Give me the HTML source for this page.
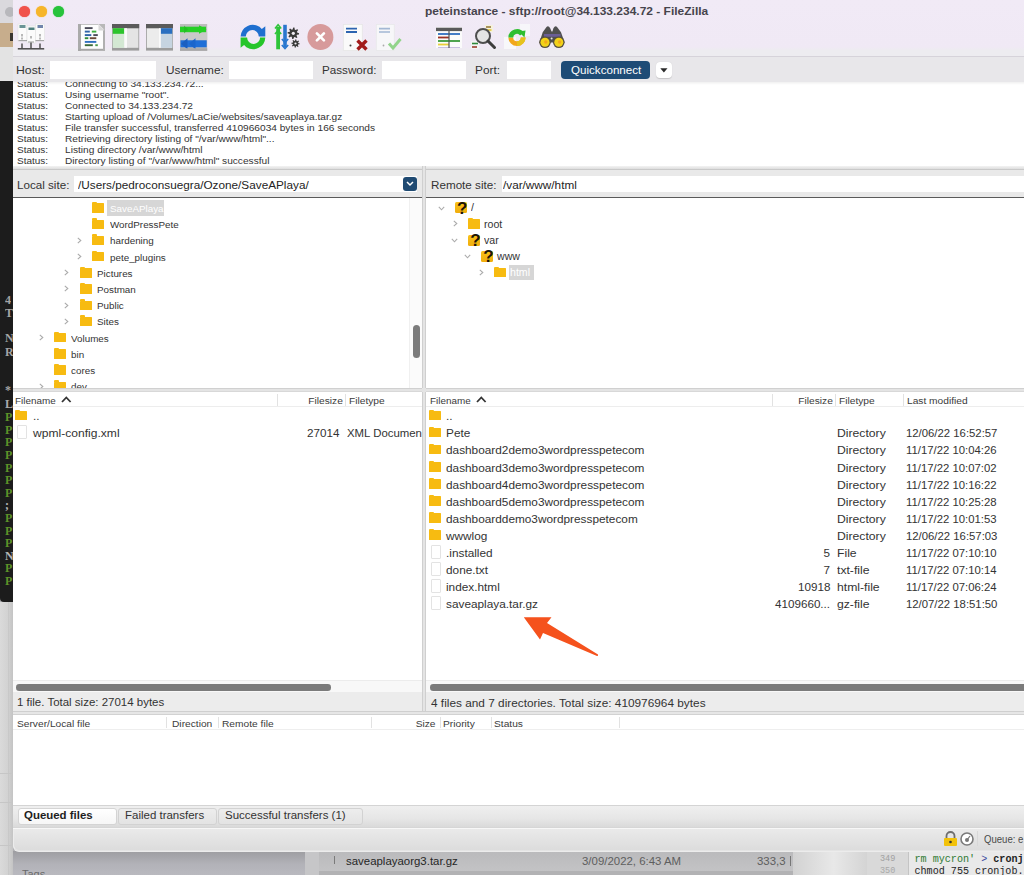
<!DOCTYPE html>
<html><head><meta charset="utf-8">
<style>
*{margin:0;padding:0;box-sizing:border-box}
html,body{width:1024px;height:875px;overflow:hidden;background:#b0b0b3;font-family:"Liberation Sans",sans-serif;color:#2e2e2e;position:relative}
.a{position:absolute}
.t{position:absolute;white-space:nowrap;line-height:1}
svg{position:absolute;overflow:visible}
</style></head><body>
<div class="a" style="left:0px;top:0px;width:13px;height:23px;background:#dad9dd"></div>
<div class="a" style="left:5px;top:7px;width:10px;height:9.5px;border-radius:50%;background:#b8b8bc"></div>
<div class="a" style="left:0px;top:23px;width:13px;height:24px;background:#c7ad8c"></div>
<div class="a" style="left:10px;top:33px;width:3px;height:8px;background:#3a3530"></div>
<div class="a" style="left:0px;top:47px;width:13px;height:34px;background:#e3e3e3"></div>
<div class="a" style="left:0px;top:81px;width:13px;height:521px;background:#1c1c1c;border-bottom-left-radius:4px"></div>
<div class="a" style="left:0px;top:602px;width:13px;height:273px;background:linear-gradient(90deg,#dadada,#d2d2d2 60%,#c4c4c4)"></div>
<div class="a" style="left:8px;top:602px;width:1px;height:273px;background:#c8c8c8"></div>
<div class="a" style="left:0px;top:773px;width:13px;height:1px;background:#c6c6c6"></div>
<div class="a" style="left:0px;top:802px;width:13px;height:1px;background:#c6c6c6"></div>
<div class="a" style="left:0px;top:845px;width:13px;height:1px;background:#c6c6c6"></div>
<div class="t" style="left:5px;top:294.3px;font-size:12px;color:#bdbdbd;font-family:'Liberation Serif',serif;font-weight:bold;opacity:0.85">4</div>
<div class="t" style="left:5px;top:307.1px;font-size:12px;color:#bdbdbd;font-family:'Liberation Serif',serif;font-weight:bold;opacity:0.85">T</div>
<div class="t" style="left:5px;top:331.9px;font-size:12px;color:#bdbdbd;font-family:'Liberation Serif',serif;font-weight:bold;opacity:0.85">N</div>
<div class="t" style="left:5px;top:345.5px;font-size:12px;color:#bdbdbd;font-family:'Liberation Serif',serif;font-weight:bold;opacity:0.85">R</div>
<div class="t" style="left:5px;top:384.1px;font-size:12px;color:#bdbdbd;font-family:'Liberation Serif',serif;font-weight:bold;opacity:0.85">*</div>
<div class="t" style="left:5px;top:398.3px;font-size:12px;color:#c4c4c4;font-family:'Liberation Serif',serif;font-weight:bold;opacity:0.85">L</div>
<div class="t" style="left:5px;top:411.1px;font-size:12px;color:#6aa82c;font-family:'Liberation Serif',serif;font-weight:bold;opacity:0.85">P</div>
<div class="t" style="left:5px;top:423.7px;font-size:12px;color:#6aa82c;font-family:'Liberation Serif',serif;font-weight:bold;opacity:0.85">P</div>
<div class="t" style="left:5px;top:436.3px;font-size:12px;color:#6aa82c;font-family:'Liberation Serif',serif;font-weight:bold;opacity:0.85">P</div>
<div class="t" style="left:5px;top:448.9px;font-size:12px;color:#6aa82c;font-family:'Liberation Serif',serif;font-weight:bold;opacity:0.85">P</div>
<div class="t" style="left:5px;top:461.5px;font-size:12px;color:#6aa82c;font-family:'Liberation Serif',serif;font-weight:bold;opacity:0.85">P</div>
<div class="t" style="left:5px;top:474.1px;font-size:12px;color:#6aa82c;font-family:'Liberation Serif',serif;font-weight:bold;opacity:0.85">P</div>
<div class="t" style="left:5px;top:486.7px;font-size:12px;color:#6aa82c;font-family:'Liberation Serif',serif;font-weight:bold;opacity:0.85">P</div>
<div class="t" style="left:5px;top:499.3px;font-size:12px;color:#cfcfcf;font-family:'Liberation Serif',serif;font-weight:bold;opacity:0.85">;</div>
<div class="t" style="left:5px;top:511.9px;font-size:12px;color:#6aa82c;font-family:'Liberation Serif',serif;font-weight:bold;opacity:0.85">P</div>
<div class="t" style="left:5px;top:524.5px;font-size:12px;color:#6aa82c;font-family:'Liberation Serif',serif;font-weight:bold;opacity:0.85">P</div>
<div class="t" style="left:5px;top:537.1px;font-size:12px;color:#6aa82c;font-family:'Liberation Serif',serif;font-weight:bold;opacity:0.85">P</div>
<div class="t" style="left:5px;top:549.7px;font-size:12px;color:#cfcfcf;font-family:'Liberation Serif',serif;font-weight:bold;opacity:0.85">N</div>
<div class="t" style="left:5px;top:562.3px;font-size:12px;color:#6aa82c;font-family:'Liberation Serif',serif;font-weight:bold;opacity:0.85">P</div>
<div class="t" style="left:5px;top:574.9px;font-size:12px;color:#6aa82c;font-family:'Liberation Serif',serif;font-weight:bold;opacity:0.85">P</div>
<div class="a" style="left:13px;top:851px;width:1011px;height:24px;background:linear-gradient(#9d9da1,#b2b2b8 55%,#b9b9bf)"></div>
<div class="t" style="left:22px;top:870.3px;font-size:10px;color:#6a6a6a;transform:scaleX(1.1);transform-origin:0 0;">Tags</div>
<div class="a" style="left:305px;top:852px;width:489px;height:19px;background:linear-gradient(#bababc,#c3c3c5)"></div>
<div class="a" style="left:305px;top:871px;width:489px;height:4px;background:#b2b2b4"></div>
<div class="a" style="left:305px;top:852px;width:14px;height:23px;background:#c6c6c8"></div>
<div class="a" style="left:334px;top:856px;width:1px;height:8px;background:#7a7a7a"></div>
<div class="t" style="left:346px;top:856.66px;font-size:10.4px;color:#262626;transform:scaleX(1.1);transform-origin:0 0;">saveaplayaorg3.tar.gz</div>
<div class="t" style="left:582px;top:856.66px;font-size:10.4px;color:#5e5e5e;transform:scaleX(1.1);transform-origin:0 0;">3/09/2022, 6:43 AM</div>
<div class="t" style="left:757px;top:856.66px;font-size:10.4px;color:#5e5e5e;transform:scaleX(1.1);transform-origin:0 0;">333,3</div>
<div class="a" style="left:790px;top:856px;width:1.2px;height:10px;background:#777"></div>
<div class="a" style="left:793px;top:851px;width:74px;height:24px;background:linear-gradient(90deg,#d2d2d2,#e8e8e8 55%,#d4d4d4)"></div>
<div class="a" style="left:867px;top:851px;width:41px;height:24px;background:#d9d9d9"></div>
<div class="t" style="left:880px;top:855.27px;font-size:8.5px;color:#a0a0a0;font-family:'Liberation Mono',monospace;">349</div>
<div class="t" style="left:880px;top:866.87px;font-size:8.5px;color:#a8a8a8;font-family:'Liberation Mono',monospace;">350</div>
<div class="a" style="left:907.5px;top:851px;width:1px;height:24px;background:#c4c4c4"></div>
<div class="a" style="left:908.5px;top:851px;width:116px;height:24px;background:#e9e9e9"></div>
<div class="t" style="left:914.5px;top:855.21px;font-size:10.1px;color:#1e1e1e;font-family:'Liberation Mono',monospace;"><span style="color:#2e7a32">rm mycron'</span> <span style="color:#3848a0">&gt;</span> <b>cronj</b></div>
<div class="t" style="left:914.5px;top:866.71px;font-size:10.1px;color:#1e1e1e;font-family:'Liberation Mono',monospace;">chmod 755 cronjob.</div>
<div class="a" style="left:13px;top:-10px;width:1030px;height:861.5px;background:#ececec;border-bottom-left-radius:6px"></div>
<div class="a" style="left:13px;top:0px;width:1011px;height:57px;background:linear-gradient(#f1eaf6,#f0e9f5 84%,#edecf0 90%,#edecf0);border-bottom:1px solid #d6d3da"></div>
<div class="a" style="left:19.3px;top:6.2px;width:11px;height:11px;border-radius:50%;background:#f0524c;box-shadow:0 0 1px #f0524c"></div>
<div class="a" style="left:36.3px;top:6.2px;width:11px;height:11px;border-radius:50%;background:#f6b52a;box-shadow:0 0 1px #f6b52a"></div>
<div class="a" style="left:53.3px;top:6.2px;width:11px;height:11px;border-radius:50%;background:#27c33b;box-shadow:0 0 1px #27c33b"></div>
<div class="t" style="left:424.5px;top:6.2px;font-size:11.3px;color:#46444c;transform:scaleX(1.06);transform-origin:0 0;font-weight:bold">peteinstance - sftp://root@34.133.234.72 - FileZilla</div>
<svg style="left:16px;top:22px" width="30" height="30" viewBox="0 0 30 30">
<rect x="2" y="2" width="9" height="17" fill="#fbfbfb" stroke="#e2e2e2" stroke-width="0.6"/>
<rect x="11" y="4" width="8.5" height="17" fill="#fbfbfb" stroke="#e2e2e2" stroke-width="0.6"/>
<rect x="19.5" y="2" width="9" height="17" fill="#fbfbfb" stroke="#e2e2e2" stroke-width="0.6"/>
<rect x="3.5" y="3" width="6" height="3" fill="#6a9496"/>
<rect x="12.5" y="5.5" width="6" height="2.5" fill="#50807f"/>
<rect x="21.5" y="3" width="5.5" height="3" fill="#7084ab"/>
<path d="M6 12v2.5M6 15.5v2M15 14v2.5M24 12v2.5M24 15.5v2" stroke="#666" stroke-width="0.9"/>
<path d="M2.5 18.6h8.5M19.5 18.6h8.5M12 20h6" stroke="#888" stroke-width="0.8"/>
<path d="M6 21.5v5M15 20.5v6M24 21.5v5" stroke="#505050" stroke-width="1.5"/>
<path d="M1.8 26.8h26.4" stroke="#4a4a4a" stroke-width="1.5"/></svg>
<svg style="left:77.7px;top:23.9px" width="27" height="27" viewBox="0 0 27 27">
<path d="M1.5 0.5h19l5.5 5.5v19.5h-24.5z" fill="#fdfdfd"/>
<path d="M0 0h3v27h-3z" fill="#aaaaaa"/>
<path d="M0 24.8h27v2h-27z" fill="#a6a6a6"/>
<path d="M25 5.5h2v21h-2z" fill="#b0b0b0"/>
<path d="M3 0h17.5v1h-17.5z" fill="#c4c4c4"/>
<path d="M20.5 0.5l6 6h-6z" fill="#d8d8d8"/>
<path d="M20.5 0l6.5 6.5v-6.5z" fill="#b8b8b8"/>
<path d="M6.8 4.1h7.8" stroke="#4a4a58" stroke-width="1.9"/>
<path d="M6.8 7.6h5" stroke="#2f64a8" stroke-width="1.9"/><path d="M13.8 7.6h4.5" stroke="#3fae3f" stroke-width="1.9"/>
<path d="M6.8 11.1h6.5" stroke="#2f64a8" stroke-width="1.9"/><path d="M15.3 11.1h4.5" stroke="#4a4a58" stroke-width="1.9"/>
<path d="M6.8 14.2h3.5" stroke="#2e8a3a" stroke-width="1.9"/><path d="M11.8 14.2h6.5" stroke="#6a4a3a" stroke-width="1.9"/>
<path d="M6.8 17.9h11.5" stroke="#2f70c0" stroke-width="1.9"/>
<path d="M6.8 21.2h8" stroke="#3a6a3a" stroke-width="1.9"/><path d="M17.3 21.2h2.5" stroke="#4a9a4a" stroke-width="1.9"/></svg>
<svg style="left:111.7px;top:24.3px" width="27.2" height="26.6" viewBox="0 0 27.2 26.6">
<rect x="0" y="0" width="27.2" height="26.6" fill="#9c9c9c"/>
<rect x="0.8" y="4.2" width="25.6" height="19.6" fill="#e4e4e4"/>
<rect x="0" y="0" width="27.2" height="4.2" fill="#5a5a5a"/>
<rect x="0.8" y="4.2" width="11.5" height="5.7" fill="#2cc42c"/>
<rect x="0.8" y="9.9" width="11.5" height="13.9" fill="#d3e8d3"/>
<rect x="12.3" y="4.2" width="2.7" height="19.6" fill="#fafafa"/></svg>
<svg style="left:145.8px;top:24.3px" width="27" height="26.6" viewBox="0 0 27 26.6">
<rect x="0" y="0" width="27" height="26.6" fill="#9c9c9c"/>
<rect x="0.8" y="4.2" width="25.4" height="19.6" fill="#ececec"/>
<rect x="0" y="0" width="27" height="4.2" fill="#5a5a5a"/>
<rect x="14.7" y="4.2" width="11.5" height="5.7" fill="#2a6fc0"/>
<rect x="14.7" y="9.9" width="11.5" height="13.9" fill="#c6d4e1"/>
<rect x="13" y="4.2" width="1.7" height="19.6" fill="#fafafa"/></svg>
<svg style="left:179.9px;top:23.9px" width="27.2" height="26.8" viewBox="0 0 27.2 26.8">
<rect x="0" y="0" width="27.2" height="26.8" fill="#bdbdbd"/>
<rect x="0" y="8" width="27.2" height="8" fill="#c9c9c9"/>
<rect x="0" y="2.7" width="26" height="5.5" fill="#26cf26"/>
<path d="M19 1.2 L26.5 5.45 L19 9.7z" fill="#26cf26"/>
<path d="M4 1.5 L8 5.45 L4 9.4z" fill="#22b822" opacity="0.7"/>
<rect x="0.5" y="16.3" width="26.2" height="7" fill="#1f6fd8"/>
<path d="M7.5 14.3 L1 19.8 L7.5 25.3z" fill="#1a5fc0"/>
<path d="M15.5 14.3 L9 19.8 L15.5 25.3z" fill="#1a66cc"/>
<rect x="0" y="24.3" width="27.2" height="2.5" fill="#a8a8a8"/></svg>
<svg style="left:239.5px;top:23.5px" width="27" height="27" viewBox="0 0 27 27">
<path d="M0.6 12.5 A12.2 12.2 0 0 1 19.5 2.8 L21.8 4.9 L25.3 2.3 L25.3 12.5 L18.8 12.5 A6.4 6.4 0 0 0 5.8 12.5 Z" fill="#1f6fcf"/>
<path d="M25.3 13.5 A12.2 12.2 0 0 1 6.4 23.2 L4.1 21.1 L0.6 23.7 L0.6 13.5 L7.1 13.5 A6.4 6.4 0 0 0 20.1 13.5 Z" fill="#27c52b"/></svg>
<svg style="left:274px;top:23.5px" width="28" height="27" viewBox="0 0 28 27">
<path d="M4.1 25.3V3" stroke="#2fc43a" stroke-width="3.8"/>
<path d="M1 4.5L4.1 0.8L7.2 4.5M1 10L4.1 6.5L7.2 10" stroke="#2fc43a" stroke-width="1.6" fill="none"/>
<path d="M11 0.8V23" stroke="#2a76cf" stroke-width="3.6"/>
<path d="M7.8 15L11 18.5L14.2 15M7.8 21L11 24.5L14.2 21" stroke="#2a76cf" stroke-width="1.6" fill="none"/>
<polygon points="19.30,3.50 20.43,3.61 20.79,5.70 21.47,6.06 23.40,5.20 24.12,6.08 22.90,7.81 23.13,8.54 25.10,9.30 24.99,10.43 22.90,10.79 22.54,11.47 23.40,13.40 22.52,14.12 20.79,12.90 20.06,13.13 19.30,15.10 18.17,14.99 17.81,12.90 17.13,12.54 15.20,13.40 14.48,12.52 15.70,10.79 15.47,10.06 13.50,9.30 13.61,8.17 15.70,7.81 16.06,7.13 15.20,5.20 16.08,4.48 17.81,5.70 18.54,5.47" fill="#3a3a3a"/><circle cx="19.3" cy="9.3" r="1.6" fill="#efebf2"/><polygon points="21.50,15.30 22.32,15.38 22.57,16.91 23.06,17.17 24.47,16.53 24.99,17.17 24.09,18.43 24.25,18.95 25.70,19.50 25.62,20.32 24.09,20.57 23.83,21.06 24.47,22.47 23.83,22.99 22.57,22.09 22.05,22.25 21.50,23.70 20.68,23.62 20.43,22.09 19.94,21.83 18.53,22.47 18.01,21.83 18.91,20.57 18.75,20.05 17.30,19.50 17.38,18.68 18.91,18.43 19.17,17.94 18.53,16.53 19.17,16.01 20.43,16.91 20.95,16.75" fill="#3a3a3a"/><circle cx="21.5" cy="19.5" r="1.1" fill="#efebf2"/></svg>
<svg style="left:307px;top:23.5px" width="27" height="27" viewBox="0 0 27 27">
<circle cx="13.4" cy="13" r="13" fill="#d79a9b"/>
<path d="M9.9 9.4l7 7M16.9 9.4l-7 7" stroke="#fff" stroke-width="2.7" stroke-linecap="round"/></svg>
<svg style="left:342.5px;top:23.5px" width="28" height="28" viewBox="0 0 28 28">
<rect x="0.3" y="0.5" width="19" height="26" fill="#fafafa" stroke="#e6e6e6" stroke-width="0.8"/>
<path d="M3 4.6h11M3 8h11" stroke="#2c64b0" stroke-width="1.9"/>
<circle cx="7.5" cy="21.5" r="1" fill="#444"/>
<path d="M14.5 16.5l9 9M23.5 16.5l-9 9" stroke="#a21b1b" stroke-width="3.4"/></svg>
<svg style="left:376px;top:23.5px" width="28" height="28" viewBox="0 0 28 28">
<rect x="0.3" y="0.5" width="18" height="26" fill="#f7f7f9" stroke="#e8e8ea" stroke-width="0.8"/>
<path d="M3 4.6h11M3 8h11" stroke="#a3b8d4" stroke-width="1.7"/>
<circle cx="7.5" cy="21.5" r="0.9" fill="#aaa"/>
<path d="M13 19.5l4 4.5l7.5 -9" stroke="#92d48b" stroke-width="3" fill="none"/></svg>
<svg style="left:436px;top:26.5px" width="28" height="24" viewBox="0 0 28 24">
<rect x="0" y="0" width="26" height="21" fill="#fbfbfb"/>
<rect x="0" y="0.7" width="26" height="3.4" fill="#5a5a5a"/>
<path d="M2 7h22" stroke="#2f6fc0" stroke-width="1.8"/>
<path d="M2 10.5h11" stroke="#9a3226" stroke-width="1.8"/>
<path d="M2 14h22" stroke="#3c9a3c" stroke-width="1.8"/>
<path d="M2 17.5h11" stroke="#e8cf3a" stroke-width="1.8"/>
<path d="M2 20.5h22" stroke="#c8c0e0" stroke-width="1"/>
<path d="M13 4v17" stroke="#555" stroke-width="1.2"/></svg>
<svg style="left:471px;top:23px" width="28" height="28" viewBox="0 0 28 28">
<rect x="14" y="2" width="8" height="7" fill="#f6f2dc"/>
<path d="M15 4h5" stroke="#8a6a2a" stroke-width="1.4"/><path d="M15.5 7h5" stroke="#e2c43a" stroke-width="1.6"/>
<rect x="0" y="18" width="8" height="8" fill="#f4f4f4"/>
<path d="M1 20.5h6" stroke="#2f8a3a" stroke-width="1.6"/><path d="M1 24h5" stroke="#9a3a2a" stroke-width="1.6"/>
<circle cx="12" cy="13" r="7" fill="#e4e4e4" stroke="#4e4e4e" stroke-width="2"/>
<path d="M17 18l6.5 6.5" stroke="#3d3d3d" stroke-width="3" stroke-linecap="round"/></svg>
<svg style="left:503px;top:23px" width="28" height="28" viewBox="0 0 28 28">
<rect x="17" y="1" width="10" height="12" fill="#f7f6fa"/>
<rect x="1" y="14" width="12" height="12" fill="#f8f8fa"/>
<path d="M20.2 14.5 A6.2 6.2 0 0 1 7.8 14.5" stroke="#f2a71c" stroke-width="4.8" fill="none"/>
<path d="M14 20.7 A6.2 6.2 0 0 0 20.2 14.5" stroke="#e6c31e" stroke-width="4.8" fill="none"/>
<path d="M7.8 14.5 A6.2 6.2 0 0 1 19 11" stroke="#2fbf30" stroke-width="4.8" fill="none"/>
<path d="M15.5 8.5 L22.5 7.5 L21.5 14.5z" fill="#2fbf30"/></svg>
<svg style="left:538.5px;top:24.5px" width="27" height="25" viewBox="0 0 27 25">
<path d="M3.7 7.2 L6.6 3.2 Q8.9 -0.8 11.2 3.2 L12.6 6.5 L13.4 6.5 L14.4 3.2 Q16.7 -0.8 19 3.2 L22 7.2 L25.6 17.5 L0.4 17.5 Z" fill="#505050"/>
<rect x="5" y="9" width="16.5" height="2.8" fill="#6a5e96"/>
<circle cx="12.6" cy="13.5" r="1" fill="#e8e8e8"/>
<circle cx="6" cy="17.3" r="5.8" fill="#57503f"/><circle cx="19.8" cy="17.3" r="5.8" fill="#57503f"/>
<circle cx="6" cy="17.3" r="4.5" fill="#f2d21a"/><circle cx="19.8" cy="17.3" r="4.5" fill="#f2d21a"/>
<circle cx="6.8" cy="17" r="1.7" fill="#f4a81c"/><circle cx="20.6" cy="17" r="1.7" fill="#f4a81c"/></svg>
<div class="a" style="left:13px;top:57px;width:1011px;height:25px;background:#e8e7ea"></div>
<div class="t" style="left:16px;top:66.13px;font-size:10.2px;color:#333333;transform:scaleX(1.2);transform-origin:0 0;">Host:</div>
<div class="a" style="left:50px;top:61px;width:105.5px;height:18px;background:#fff"></div>
<div class="t" style="left:165.8px;top:66.13px;font-size:10.2px;color:#333333;transform:scaleX(1.16);transform-origin:0 0;">Username:</div>
<div class="a" style="left:228.6px;top:61px;width:84px;height:18px;background:#fff"></div>
<div class="t" style="left:322px;top:66.13px;font-size:10.2px;color:#333333;transform:scaleX(1.145);transform-origin:0 0;">Password:</div>
<div class="a" style="left:381.5px;top:61px;width:84px;height:18px;background:#fff"></div>
<div class="t" style="left:474.7px;top:66.13px;font-size:10.2px;color:#333333;transform:scaleX(1.16);transform-origin:0 0;">Port:</div>
<div class="a" style="left:507px;top:61px;width:44px;height:18px;background:#fff"></div>
<div class="a" style="left:561.3px;top:61.3px;width:89px;height:17.6px;background:#1e4c76;border-radius:4px"></div>
<div class="t" style="left:570.7px;top:64.85px;font-size:11px;color:#fff;transform:scaleX(1.055);transform-origin:0 0;">Quickconnect</div>
<div class="a" style="left:655.6px;top:61.9px;width:16px;height:16.4px;background:#fff;border-radius:4px;box-shadow:0 0.5px 1px rgba(0,0,0,.15)"></div>
<svg style="left:660px;top:67.5px" width="8" height="5" viewBox="0 0 8 5"><path d="M0.3 0.3h7.2l-3.6 4.2z" fill="#2a2a2a"/></svg>
<div class="a" style="left:13px;top:82px;width:1011px;height:83.5px;background:#fff;overflow:hidden">
<div class="t" style="left:4.4px;top:-2.23px;font-size:9.1px;color:#333;transform:scaleX(1.1);transform-origin:0 0">Status:</div>
<div class="t" style="left:52.3px;top:-2.23px;font-size:9.1px;color:#333;transform:scaleX(1.115);transform-origin:0 0">Connecting to 34.133.234.72...</div>
<div class="t" style="left:4.4px;top:8.8px;font-size:9.1px;color:#333;transform:scaleX(1.1);transform-origin:0 0">Status:</div>
<div class="t" style="left:52.3px;top:8.8px;font-size:9.1px;color:#333;transform:scaleX(1.115);transform-origin:0 0">Using username "root".</div>
<div class="t" style="left:4.4px;top:19.83px;font-size:9.1px;color:#333;transform:scaleX(1.1);transform-origin:0 0">Status:</div>
<div class="t" style="left:52.3px;top:19.83px;font-size:9.1px;color:#333;transform:scaleX(1.115);transform-origin:0 0">Connected to 34.133.234.72</div>
<div class="t" style="left:4.4px;top:30.85px;font-size:9.1px;color:#333;transform:scaleX(1.1);transform-origin:0 0">Status:</div>
<div class="t" style="left:52.3px;top:30.85px;font-size:9.1px;color:#333;transform:scaleX(1.115);transform-origin:0 0">Starting upload of /Volumes/LaCie/websites/saveaplaya.tar.gz</div>
<div class="t" style="left:4.4px;top:41.88px;font-size:9.1px;color:#333;transform:scaleX(1.1);transform-origin:0 0">Status:</div>
<div class="t" style="left:52.3px;top:41.88px;font-size:9.1px;color:#333;transform:scaleX(1.115);transform-origin:0 0">File transfer successful, transferred 410966034 bytes in 166 seconds</div>
<div class="t" style="left:4.4px;top:52.91px;font-size:9.1px;color:#333;transform:scaleX(1.1);transform-origin:0 0">Status:</div>
<div class="t" style="left:52.3px;top:52.91px;font-size:9.1px;color:#333;transform:scaleX(1.115);transform-origin:0 0">Retrieving directory listing of "/var/www/html"...</div>
<div class="t" style="left:4.4px;top:63.94px;font-size:9.1px;color:#333;transform:scaleX(1.1);transform-origin:0 0">Status:</div>
<div class="t" style="left:52.3px;top:63.94px;font-size:9.1px;color:#333;transform:scaleX(1.115);transform-origin:0 0">Listing directory /var/www/html</div>
<div class="t" style="left:4.4px;top:74.97px;font-size:9.1px;color:#333;transform:scaleX(1.1);transform-origin:0 0">Status:</div>
<div class="t" style="left:52.3px;top:74.97px;font-size:9.1px;color:#333;transform:scaleX(1.115);transform-origin:0 0">Directory listing of "/var/www/html" successful</div>
</div>
<div class="a" style="left:13px;top:82px;width:1011px;height:3px;background:linear-gradient(rgba(0,0,0,0.06),rgba(0,0,0,0))"></div>
<div class="a" style="left:13px;top:165.5px;width:1011px;height:3.7px;background:linear-gradient(#f3f3f3,#dedede)"></div>
<div class="a" style="left:13px;top:169.2px;width:1011px;height:1px;background:#c9c9c9"></div>
<div class="a" style="left:13px;top:170.2px;width:409px;height:26.8px;background:#e9e9e9"></div>
<div class="t" style="left:16.6px;top:180.75px;font-size:10.3px;color:#333333;transform:scaleX(1.13);transform-origin:0 0;">Local site:</div>
<div class="a" style="left:74px;top:176px;width:343px;height:16px;background:#fff"></div>
<div class="t" style="left:77.7px;top:180.41px;font-size:10.7px;color:#242424;transform:scaleX(1.1);transform-origin:0 0;">/Users/pedroconsuegra/Ozone/SaveAPlaya/</div>
<div class="a" style="left:13px;top:197px;width:409px;height:1px;background:#5a5a5a"></div>
<div class="a" style="left:403px;top:177px;width:14px;height:14px;background:#1f4a72;border-radius:3px"></div>
<svg style="left:406px;top:181px" width="8" height="6" viewBox="0 0 8 6"><path d="M1 1l3 3l3 -3" stroke="#fff" stroke-width="1.5" fill="none"/></svg>
<div class="a" style="left:426px;top:170.2px;width:598px;height:26.8px;background:#e9e9e9"></div>
<div class="t" style="left:430.8px;top:180.75px;font-size:10.3px;color:#333333;transform:scaleX(1.133);transform-origin:0 0;">Remote site:</div>
<div class="a" style="left:501.5px;top:176px;width:522.5px;height:16px;background:#fff"></div>
<div class="t" style="left:502.6px;top:180.41px;font-size:10.7px;color:#242424;transform:scaleX(1.1);transform-origin:0 0;">/var/www/html</div>
<div class="a" style="left:426px;top:197px;width:598px;height:1px;background:#5a5a5a"></div>
<div class="a" style="left:422px;top:166px;width:4px;height:546px;background:#e4e4e4;border-left:1px solid #cfcfcf;border-right:1px solid #cfcfcf"></div>
<div class="a" style="left:13px;top:198px;width:409px;height:190px;background:#fff"></div>
<div class="a" style="left:426px;top:198px;width:598px;height:190px;background:#fff"></div>
<div class="a" style="left:14px;top:198px;width:395px;height:190px;overflow:hidden">
<div class="a" style="left:78.31px;top:5.30px;width:12px;height:9.5px;background:#f7bb11;border-radius:0.5px"></div>
<div class="a" style="left:78.31px;top:4.00px;width:5px;height:2px;background:#f7bb11;border-radius:1px 1px 0 0"></div>
<div class="a" style="left:92.81px;top:2.00px;width:57px;height:15.8px;background:#d6d6d6"></div>
<div class="t" style="left:95.51px;top:5.96px;font-size:9.7px;color:#fff;transform:scaleX(1.015);transform-origin:0 0;">SaveAPlaya</div>
<div class="a" style="left:78.31px;top:21.50px;width:12px;height:9.5px;background:#f7bb11;border-radius:0.5px"></div>
<div class="a" style="left:78.31px;top:20.20px;width:5px;height:2px;background:#f7bb11;border-radius:1px 1px 0 0"></div>
<div class="t" style="left:95.51px;top:22.16px;font-size:9.7px;color:#333333;transform:scaleX(1.015);transform-origin:0 0;">WordPressPete</div>
<svg style="left:63.11px;top:38.70px" width="5" height="7" viewBox="0 0 5 7"><path d="M0.8 0.8L3.8 3.5L0.8 6.2" stroke="#ababab" stroke-width="1.1" fill="none"/></svg>
<div class="a" style="left:78.31px;top:37.70px;width:12px;height:9.5px;background:#f7bb11;border-radius:0.5px"></div>
<div class="a" style="left:78.31px;top:36.40px;width:5px;height:2px;background:#f7bb11;border-radius:1px 1px 0 0"></div>
<div class="t" style="left:95.51px;top:38.36px;font-size:9.7px;color:#333333;transform:scaleX(1.015);transform-origin:0 0;">hardening</div>
<svg style="left:63.11px;top:54.90px" width="5" height="7" viewBox="0 0 5 7"><path d="M0.8 0.8L3.8 3.5L0.8 6.2" stroke="#ababab" stroke-width="1.1" fill="none"/></svg>
<div class="a" style="left:78.31px;top:53.90px;width:12px;height:9.5px;background:#f7bb11;border-radius:0.5px"></div>
<div class="a" style="left:78.31px;top:52.60px;width:5px;height:2px;background:#f7bb11;border-radius:1px 1px 0 0"></div>
<div class="t" style="left:95.51px;top:54.56px;font-size:9.7px;color:#333333;transform:scaleX(1.015);transform-origin:0 0;">pete_plugins</div>
<svg style="left:50.34px;top:71.10px" width="5" height="7" viewBox="0 0 5 7"><path d="M0.8 0.8L3.8 3.5L0.8 6.2" stroke="#ababab" stroke-width="1.1" fill="none"/></svg>
<div class="a" style="left:65.54px;top:70.10px;width:12px;height:9.5px;background:#f7bb11;border-radius:0.5px"></div>
<div class="a" style="left:65.54px;top:68.80px;width:5px;height:2px;background:#f7bb11;border-radius:1px 1px 0 0"></div>
<div class="t" style="left:82.74px;top:70.76px;font-size:9.7px;color:#333333;transform:scaleX(1.015);transform-origin:0 0;">Pictures</div>
<svg style="left:50.34px;top:87.30px" width="5" height="7" viewBox="0 0 5 7"><path d="M0.8 0.8L3.8 3.5L0.8 6.2" stroke="#ababab" stroke-width="1.1" fill="none"/></svg>
<div class="a" style="left:65.54px;top:86.30px;width:12px;height:9.5px;background:#f7bb11;border-radius:0.5px"></div>
<div class="a" style="left:65.54px;top:85.00px;width:5px;height:2px;background:#f7bb11;border-radius:1px 1px 0 0"></div>
<div class="t" style="left:82.74px;top:86.96px;font-size:9.7px;color:#333333;transform:scaleX(1.015);transform-origin:0 0;">Postman</div>
<svg style="left:50.34px;top:103.50px" width="5" height="7" viewBox="0 0 5 7"><path d="M0.8 0.8L3.8 3.5L0.8 6.2" stroke="#ababab" stroke-width="1.1" fill="none"/></svg>
<div class="a" style="left:65.54px;top:102.50px;width:12px;height:9.5px;background:#f7bb11;border-radius:0.5px"></div>
<div class="a" style="left:65.54px;top:101.20px;width:5px;height:2px;background:#f7bb11;border-radius:1px 1px 0 0"></div>
<div class="t" style="left:82.74px;top:103.16px;font-size:9.7px;color:#333333;transform:scaleX(1.015);transform-origin:0 0;">Public</div>
<svg style="left:50.34px;top:119.70px" width="5" height="7" viewBox="0 0 5 7"><path d="M0.8 0.8L3.8 3.5L0.8 6.2" stroke="#ababab" stroke-width="1.1" fill="none"/></svg>
<div class="a" style="left:65.54px;top:118.70px;width:12px;height:9.5px;background:#f7bb11;border-radius:0.5px"></div>
<div class="a" style="left:65.54px;top:117.40px;width:5px;height:2px;background:#f7bb11;border-radius:1px 1px 0 0"></div>
<div class="t" style="left:82.74px;top:119.36px;font-size:9.7px;color:#333333;transform:scaleX(1.015);transform-origin:0 0;">Sites</div>
<svg style="left:24.80px;top:135.90px" width="5" height="7" viewBox="0 0 5 7"><path d="M0.8 0.8L3.8 3.5L0.8 6.2" stroke="#ababab" stroke-width="1.1" fill="none"/></svg>
<div class="a" style="left:40.00px;top:134.90px;width:12px;height:9.5px;background:#f7bb11;border-radius:0.5px"></div>
<div class="a" style="left:40.00px;top:133.60px;width:5px;height:2px;background:#f7bb11;border-radius:1px 1px 0 0"></div>
<div class="t" style="left:57.20px;top:135.56px;font-size:9.7px;color:#333333;transform:scaleX(1.015);transform-origin:0 0;">Volumes</div>
<div class="a" style="left:40.00px;top:151.10px;width:12px;height:9.5px;background:#f7bb11;border-radius:0.5px"></div>
<div class="a" style="left:40.00px;top:149.80px;width:5px;height:2px;background:#f7bb11;border-radius:1px 1px 0 0"></div>
<div class="t" style="left:57.20px;top:151.76px;font-size:9.7px;color:#333333;transform:scaleX(1.015);transform-origin:0 0;">bin</div>
<div class="a" style="left:40.00px;top:167.30px;width:12px;height:9.5px;background:#f7bb11;border-radius:0.5px"></div>
<div class="a" style="left:40.00px;top:166.00px;width:5px;height:2px;background:#f7bb11;border-radius:1px 1px 0 0"></div>
<div class="t" style="left:57.20px;top:167.96px;font-size:9.7px;color:#333333;transform:scaleX(1.015);transform-origin:0 0;">cores</div>
<svg style="left:24.80px;top:184.50px" width="5" height="7" viewBox="0 0 5 7"><path d="M0.8 0.8L3.8 3.5L0.8 6.2" stroke="#ababab" stroke-width="1.1" fill="none"/></svg>
<div class="a" style="left:40.00px;top:183.50px;width:12px;height:9.5px;background:#f7bb11;border-radius:0.5px"></div>
<div class="a" style="left:40.00px;top:182.20px;width:5px;height:2px;background:#f7bb11;border-radius:1px 1px 0 0"></div>
<div class="t" style="left:57.20px;top:184.16px;font-size:9.7px;color:#333333;transform:scaleX(1.015);transform-origin:0 0;">dev</div>
</div>
<div class="a" style="left:409px;top:198px;width:13px;height:190px;background:#fbfbfb;border-left:1px solid #f0f0f0"></div>
<div class="a" style="left:413px;top:325px;width:7px;height:32.5px;background:#7c7c7c;border-radius:3.5px"></div>
<svg style="left:437.5px;top:205.5px" width="7" height="5" viewBox="0 0 7 5"><path d="M0.8 0.8L3.5 3.8L6.2 0.8" stroke="#ababab" stroke-width="1.1" fill="none"/></svg>
<div class="a" style="left:454.5px;top:202.2px;width:12px;height:11px;background:linear-gradient(#f9c21a,#f0ad0c);border-radius:1.5px"></div>
<div class="t" style="left:457.1px;top:199.6px;font-size:17px;font-weight:bold;color:#1c1408">?</div>
<div class="t" style="left:471.0px;top:203.4px;font-size:10px;color:#333333;transform:scaleX(1.06);transform-origin:0 0;">/</div>
<svg style="left:452.6px;top:220.2px" width="5" height="7" viewBox="0 0 5 7"><path d="M0.8 0.8L3.8 3.5L0.8 6.2" stroke="#ababab" stroke-width="1.1" fill="none"/></svg>
<div class="a" style="left:467.6px;top:219.2px;width:12px;height:9.5px;background:#f7bb11;border-radius:0.5px"></div>
<div class="a" style="left:467.6px;top:217.89999999999998px;width:5px;height:2px;background:#f7bb11;border-radius:1px 1px 0 0"></div>
<div class="t" style="left:484.1px;top:219.6px;font-size:10px;color:#333333;transform:scaleX(1.06);transform-origin:0 0;">root</div>
<svg style="left:450.6px;top:237.9px" width="7" height="5" viewBox="0 0 7 5"><path d="M0.8 0.8L3.5 3.8L6.2 0.8" stroke="#ababab" stroke-width="1.1" fill="none"/></svg>
<div class="a" style="left:467.6px;top:234.6px;width:12px;height:11px;background:linear-gradient(#f9c21a,#f0ad0c);border-radius:1.5px"></div>
<div class="t" style="left:470.20000000000005px;top:232.0px;font-size:17px;font-weight:bold;color:#1c1408">?</div>
<div class="t" style="left:484.1px;top:235.8px;font-size:10px;color:#333333;transform:scaleX(1.06);transform-origin:0 0;">var</div>
<svg style="left:463.7px;top:254.10000000000002px" width="7" height="5" viewBox="0 0 7 5"><path d="M0.8 0.8L3.5 3.8L6.2 0.8" stroke="#ababab" stroke-width="1.1" fill="none"/></svg>
<div class="a" style="left:480.7px;top:250.8px;width:12px;height:11px;background:linear-gradient(#f9c21a,#f0ad0c);border-radius:1.5px"></div>
<div class="t" style="left:483.3px;top:248.20000000000002px;font-size:17px;font-weight:bold;color:#1c1408">?</div>
<div class="t" style="left:497.2px;top:252.0px;font-size:10px;color:#333333;transform:scaleX(1.06);transform-origin:0 0;">www</div>
<svg style="left:478.8px;top:268.8px" width="5" height="7" viewBox="0 0 5 7"><path d="M0.8 0.8L3.8 3.5L0.8 6.2" stroke="#ababab" stroke-width="1.1" fill="none"/></svg>
<div class="a" style="left:493.8px;top:267.8px;width:12px;height:9.5px;background:#f7bb11;border-radius:0.5px"></div>
<div class="a" style="left:493.8px;top:266.5px;width:5px;height:2px;background:#f7bb11;border-radius:1px 1px 0 0"></div>
<div class="a" style="left:508.8px;top:264.8px;width:25px;height:15.5px;background:#d6d6d6"></div>
<div class="t" style="left:510.3px;top:268.2px;font-size:10px;color:#fff;transform:scaleX(1.06);transform-origin:0 0;">html</div>
<div class="a" style="left:13px;top:388px;width:1011px;height:4px;background:#e4e4e4;border-top:1px solid #d0d0d0;border-bottom:1px solid #d8d8d8"></div>
<div class="a" style="left:422px;top:388px;width:4px;height:4px;background:#e4e4e4"></div>
<div class="a" style="left:13px;top:392px;width:409px;height:288px;background:#fff"></div>
<div class="a" style="left:426px;top:392px;width:598px;height:288px;background:#fff"></div>
<div class="a" style="left:13px;top:392px;width:409px;height:15px;background:#fff;border-bottom:1px solid #ededed"></div>
<div class="a" style="left:426px;top:392px;width:598px;height:15px;background:#fff;border-bottom:1px solid #ededed"></div>
<div class="t" style="left:15.4px;top:396.88px;font-size:8.5px;color:#3a3a3a;transform:scaleX(1.165);transform-origin:0 0;">Filename</div>
<svg style="left:61px;top:396px" width="11" height="7" viewBox="0 0 11 7"><path d="M1 6L5.3 1.5L9.6 6" stroke="#333" stroke-width="1.8" fill="none"/></svg>
<div class="a" style="left:277px;top:394px;width:1px;height:12px;background:#e2e2e2"></div>
<div class="t" style="right:681.5px;top:396.88px;font-size:8.5px;color:#3a3a3a;text-align:right;transform:scaleX(1.2);transform-origin:100% 0;">Filesize</div>
<div class="a" style="left:345px;top:394px;width:1px;height:12px;background:#e2e2e2"></div>
<div class="t" style="left:349.2px;top:396.88px;font-size:8.5px;color:#3a3a3a;transform:scaleX(1.2);transform-origin:0 0;">Filetype</div>
<div class="t" style="left:429.8px;top:396.88px;font-size:8.5px;color:#3a3a3a;transform:scaleX(1.165);transform-origin:0 0;">Filename</div>
<svg style="left:475.5px;top:396px" width="11" height="7" viewBox="0 0 11 7"><path d="M1 6L5.3 1.5L9.6 6" stroke="#333" stroke-width="1.8" fill="none"/></svg>
<div class="a" style="left:771.5px;top:394px;width:1px;height:12px;background:#e2e2e2"></div>
<div class="t" style="right:191.5px;top:396.88px;font-size:8.5px;color:#3a3a3a;text-align:right;transform:scaleX(1.2);transform-origin:100% 0;">Filesize</div>
<div class="a" style="left:834.5px;top:394px;width:1px;height:12px;background:#e2e2e2"></div>
<div class="t" style="left:838.6px;top:396.88px;font-size:8.5px;color:#3a3a3a;transform:scaleX(1.2);transform-origin:0 0;">Filetype</div>
<div class="a" style="left:903px;top:394px;width:1px;height:12px;background:#e2e2e2"></div>
<div class="t" style="left:907px;top:396.88px;font-size:8.5px;color:#3a3a3a;transform:scaleX(1.2);transform-origin:0 0;">Last modified</div>
<div class="a" style="left:15px;top:410.8px;width:12px;height:9.5px;background:#f7bb11;border-radius:0.5px"></div>
<div class="a" style="left:15px;top:409.5px;width:5px;height:2px;background:#f7bb11;border-radius:1px 1px 0 0"></div>
<div class="t" style="left:33px;top:411.29px;font-size:10.6px;color:#333333;transform:scaleX(1.1);transform-origin:0 0;">..</div>
<div class="a" style="left:16.5px;top:425.38px;width:10px;height:14px;background:#fff;border:1px solid #e3e3e3;border-radius:1px"></div>
<div class="t" style="left:33px;top:428.37px;font-size:10.6px;color:#333333;transform:scaleX(1.14);transform-origin:0 0;">wpml-config.xml</div>
<div class="t" style="right:684.5px;top:428.37px;font-size:10.6px;color:#333333;text-align:right;transform:scaleX(1.1);transform-origin:100% 0;">27014</div>
<div class="a" style="left:346.5px;top:420px;width:76.5px;height:20px;overflow:hidden">
<div class="t" style="left:0.00px;top:8.37px;font-size:10.6px;color:#333333;transform:scaleX(1.075);transform-origin:0 0;">XML Documen</div>
</div>
<div class="a" style="left:428.6px;top:410.8px;width:12px;height:9.5px;background:#f7bb11;border-radius:0.5px"></div>
<div class="a" style="left:428.6px;top:409.5px;width:5px;height:2px;background:#f7bb11;border-radius:1px 1px 0 0"></div>
<div class="t" style="left:445.5px;top:411.29px;font-size:10.6px;color:#333333;transform:scaleX(1.115);transform-origin:0 0;">..</div>
<div class="a" style="left:428.6px;top:427.88px;width:12px;height:9.5px;background:#f7bb11;border-radius:0.5px"></div>
<div class="a" style="left:428.6px;top:426.58px;width:5px;height:2px;background:#f7bb11;border-radius:1px 1px 0 0"></div>
<div class="t" style="left:445.5px;top:428.37px;font-size:10.6px;color:#333333;transform:scaleX(1.115);transform-origin:0 0;">Pete</div>
<div class="t" style="left:837.3px;top:428.37px;font-size:10.6px;color:#333333;transform:scaleX(1.15);transform-origin:0 0;">Directory</div>
<div class="t" style="left:905.6px;top:428.37px;font-size:10.6px;color:#333333;transform:scaleX(1.07);transform-origin:0 0;">12/06/22 16:52:57</div>
<div class="a" style="left:428.6px;top:444.96px;width:12px;height:9.5px;background:#f7bb11;border-radius:0.5px"></div>
<div class="a" style="left:428.6px;top:443.65999999999997px;width:5px;height:2px;background:#f7bb11;border-radius:1px 1px 0 0"></div>
<div class="t" style="left:445.5px;top:445.45px;font-size:10.6px;color:#333333;transform:scaleX(1.115);transform-origin:0 0;">dashboard2demo3wordpresspetecom</div>
<div class="t" style="left:837.3px;top:445.45px;font-size:10.6px;color:#333333;transform:scaleX(1.15);transform-origin:0 0;">Directory</div>
<div class="t" style="left:905.6px;top:445.45px;font-size:10.6px;color:#333333;transform:scaleX(1.07);transform-origin:0 0;">11/17/22 10:04:26</div>
<div class="a" style="left:428.6px;top:462.04px;width:12px;height:9.5px;background:#f7bb11;border-radius:0.5px"></div>
<div class="a" style="left:428.6px;top:460.74px;width:5px;height:2px;background:#f7bb11;border-radius:1px 1px 0 0"></div>
<div class="t" style="left:445.5px;top:462.53px;font-size:10.6px;color:#333333;transform:scaleX(1.115);transform-origin:0 0;">dashboard3demo3wordpresspetecom</div>
<div class="t" style="left:837.3px;top:462.53px;font-size:10.6px;color:#333333;transform:scaleX(1.15);transform-origin:0 0;">Directory</div>
<div class="t" style="left:905.6px;top:462.53px;font-size:10.6px;color:#333333;transform:scaleX(1.07);transform-origin:0 0;">11/17/22 10:07:02</div>
<div class="a" style="left:428.6px;top:479.12px;width:12px;height:9.5px;background:#f7bb11;border-radius:0.5px"></div>
<div class="a" style="left:428.6px;top:477.82px;width:5px;height:2px;background:#f7bb11;border-radius:1px 1px 0 0"></div>
<div class="t" style="left:445.5px;top:479.61px;font-size:10.6px;color:#333333;transform:scaleX(1.115);transform-origin:0 0;">dashboard4demo3wordpresspetecom</div>
<div class="t" style="left:837.3px;top:479.61px;font-size:10.6px;color:#333333;transform:scaleX(1.15);transform-origin:0 0;">Directory</div>
<div class="t" style="left:905.6px;top:479.61px;font-size:10.6px;color:#333333;transform:scaleX(1.07);transform-origin:0 0;">11/17/22 10:16:22</div>
<div class="a" style="left:428.6px;top:496.2px;width:12px;height:9.5px;background:#f7bb11;border-radius:0.5px"></div>
<div class="a" style="left:428.6px;top:494.9px;width:5px;height:2px;background:#f7bb11;border-radius:1px 1px 0 0"></div>
<div class="t" style="left:445.5px;top:496.69px;font-size:10.6px;color:#333333;transform:scaleX(1.115);transform-origin:0 0;">dashboard5demo3wordpresspetecom</div>
<div class="t" style="left:837.3px;top:496.69px;font-size:10.6px;color:#333333;transform:scaleX(1.15);transform-origin:0 0;">Directory</div>
<div class="t" style="left:905.6px;top:496.69px;font-size:10.6px;color:#333333;transform:scaleX(1.07);transform-origin:0 0;">11/17/22 10:25:28</div>
<div class="a" style="left:428.6px;top:513.28px;width:12px;height:9.5px;background:#f7bb11;border-radius:0.5px"></div>
<div class="a" style="left:428.6px;top:511.97999999999996px;width:5px;height:2px;background:#f7bb11;border-radius:1px 1px 0 0"></div>
<div class="t" style="left:445.5px;top:513.77px;font-size:10.6px;color:#333333;transform:scaleX(1.115);transform-origin:0 0;">dashboarddemo3wordpresspetecom</div>
<div class="t" style="left:837.3px;top:513.77px;font-size:10.6px;color:#333333;transform:scaleX(1.15);transform-origin:0 0;">Directory</div>
<div class="t" style="left:905.6px;top:513.77px;font-size:10.6px;color:#333333;transform:scaleX(1.07);transform-origin:0 0;">11/17/22 10:01:53</div>
<div class="a" style="left:428.6px;top:530.3599999999999px;width:12px;height:9.5px;background:#f7bb11;border-radius:0.5px"></div>
<div class="a" style="left:428.6px;top:529.06px;width:5px;height:2px;background:#f7bb11;border-radius:1px 1px 0 0"></div>
<div class="t" style="left:445.5px;top:530.85px;font-size:10.6px;color:#333333;transform:scaleX(1.115);transform-origin:0 0;">wwwlog</div>
<div class="t" style="left:837.3px;top:530.85px;font-size:10.6px;color:#333333;transform:scaleX(1.15);transform-origin:0 0;">Directory</div>
<div class="t" style="left:905.6px;top:530.85px;font-size:10.6px;color:#333333;transform:scaleX(1.07);transform-origin:0 0;">12/06/22 16:57:03</div>
<div class="a" style="left:430.8px;top:544.9399999999999px;width:10px;height:14px;background:#fff;border:1px solid #e3e3e3;border-radius:1px"></div>
<div class="t" style="left:445.5px;top:547.93px;font-size:10.6px;color:#333333;transform:scaleX(1.115);transform-origin:0 0;">.installed</div>
<div class="t" style="right:194px;top:547.93px;font-size:10.6px;color:#333333;text-align:right;transform:scaleX(1.1);transform-origin:100% 0;">5</div>
<div class="t" style="left:837.3px;top:547.93px;font-size:10.6px;color:#333333;transform:scaleX(1.15);transform-origin:0 0;">File</div>
<div class="t" style="left:905.6px;top:547.93px;font-size:10.6px;color:#333333;transform:scaleX(1.07);transform-origin:0 0;">11/17/22 07:10:10</div>
<div class="a" style="left:430.8px;top:562.02px;width:10px;height:14px;background:#fff;border:1px solid #e3e3e3;border-radius:1px"></div>
<div class="t" style="left:445.5px;top:565.01px;font-size:10.6px;color:#333333;transform:scaleX(1.115);transform-origin:0 0;">done.txt</div>
<div class="t" style="right:194px;top:565.01px;font-size:10.6px;color:#333333;text-align:right;transform:scaleX(1.1);transform-origin:100% 0;">7</div>
<div class="t" style="left:837.3px;top:565.01px;font-size:10.6px;color:#333333;transform:scaleX(1.15);transform-origin:0 0;">txt-file</div>
<div class="t" style="left:905.6px;top:565.01px;font-size:10.6px;color:#333333;transform:scaleX(1.07);transform-origin:0 0;">11/17/22 07:10:14</div>
<div class="a" style="left:430.8px;top:579.0999999999999px;width:10px;height:14px;background:#fff;border:1px solid #e3e3e3;border-radius:1px"></div>
<div class="t" style="left:445.5px;top:582.09px;font-size:10.6px;color:#333333;transform:scaleX(1.115);transform-origin:0 0;">index.html</div>
<div class="t" style="right:194px;top:582.09px;font-size:10.6px;color:#333333;text-align:right;transform:scaleX(1.1);transform-origin:100% 0;">10918</div>
<div class="t" style="left:837.3px;top:582.09px;font-size:10.6px;color:#333333;transform:scaleX(1.15);transform-origin:0 0;">html-file</div>
<div class="t" style="left:905.6px;top:582.09px;font-size:10.6px;color:#333333;transform:scaleX(1.07);transform-origin:0 0;">11/17/22 07:06:24</div>
<div class="a" style="left:430.8px;top:596.18px;width:10px;height:14px;background:#fff;border:1px solid #e3e3e3;border-radius:1px"></div>
<div class="t" style="left:445.5px;top:599.17px;font-size:10.6px;color:#333333;transform:scaleX(1.115);transform-origin:0 0;">saveaplaya.tar.gz</div>
<div class="t" style="right:194px;top:599.17px;font-size:10.6px;color:#333333;text-align:right;transform:scaleX(1.1);transform-origin:100% 0;">4109660...</div>
<div class="t" style="left:837.3px;top:599.17px;font-size:10.6px;color:#333333;transform:scaleX(1.15);transform-origin:0 0;">gz-file</div>
<div class="t" style="left:905.6px;top:599.17px;font-size:10.6px;color:#333333;transform:scaleX(1.07);transform-origin:0 0;">12/07/22 18:51:50</div>
<svg style="left:520px;top:612px" width="85" height="50" viewBox="0 0 85 50"><path d="M3.8 5.3 L31.5 5.3 L27 11 L78 42.5 Q78.5 44 77 44 L23 21 L20 27.5 Z" fill="#f5521d"/></svg>
<div class="a" style="left:13px;top:680px;width:409px;height:11.5px;background:#f8f8f8;border-top:1px solid #ececec"></div>
<div class="a" style="left:15.5px;top:684px;width:315.5px;height:6.5px;background:#7b7b7b;border-radius:3.25px"></div>
<div class="a" style="left:426px;top:680px;width:598px;height:11.5px;background:#f8f8f8;border-top:1px solid #ececec"></div>
<div class="a" style="left:430px;top:684px;width:600px;height:6.5px;background:#7b7b7b;border-radius:3.25px"></div>
<div class="a" style="left:13px;top:691.5px;width:409px;height:21px;background:#ececec"></div>
<div class="t" style="left:16.8px;top:698.12px;font-size:10.45px;color:#333333;transform:scaleX(1.1);transform-origin:0 0;">1 file. Total size: 27014 bytes</div>
<div class="a" style="left:426px;top:691.5px;width:598px;height:21px;background:#ececec"></div>
<div class="t" style="left:431px;top:697.86px;font-size:10.75px;color:#333333;transform:scaleX(1.1);transform-origin:0 0;">4 files and 7 directories. Total size: 410976964 bytes</div>
<div class="a" style="left:13px;top:711px;width:1011px;height:3.8px;background:#e6e6e6;border-top:1px solid #cfcfcf;border-bottom:1px solid #d2d2d2"></div>
<div class="a" style="left:13px;top:714.5px;width:1011px;height:90.5px;background:#fff"></div>
<div class="a" style="left:13px;top:714.5px;width:1011px;height:15px;background:#fff;border-bottom:1px solid #eeeeee"></div>
<div class="t" style="left:17px;top:719.57px;font-size:8.5px;color:#3a3a3a;transform:scaleX(1.2);transform-origin:0 0;">Server/Local file</div>
<div class="a" style="left:166px;top:717px;width:1px;height:11px;background:#e2e2e2"></div>
<div class="t" style="left:172px;top:719.57px;font-size:8.5px;color:#3a3a3a;transform:scaleX(1.2);transform-origin:0 0;">Direction</div>
<div class="a" style="left:218px;top:717px;width:1px;height:11px;background:#e2e2e2"></div>
<div class="t" style="left:221.8px;top:719.57px;font-size:8.5px;color:#3a3a3a;transform:scaleX(1.2);transform-origin:0 0;">Remote file</div>
<div class="a" style="left:371px;top:717px;width:1px;height:11px;background:#e2e2e2"></div>
<div class="t" style="right:588px;top:719.57px;font-size:8.5px;color:#3a3a3a;text-align:right;transform:scaleX(1.2);transform-origin:100% 0;">Size</div>
<div class="a" style="left:440px;top:717px;width:1px;height:11px;background:#e2e2e2"></div>
<div class="t" style="left:443px;top:719.57px;font-size:8.5px;color:#3a3a3a;transform:scaleX(1.2);transform-origin:0 0;">Priority</div>
<div class="a" style="left:491px;top:717px;width:1px;height:11px;background:#e2e2e2"></div>
<div class="t" style="left:494.4px;top:719.57px;font-size:8.5px;color:#3a3a3a;transform:scaleX(1.2);transform-origin:0 0;">Status</div>
<div class="a" style="left:619px;top:717px;width:1px;height:11px;background:#e2e2e2"></div>
<div class="a" style="left:13px;top:805px;width:1011px;height:21.7px;background:linear-gradient(#efefef,#e6e6e6 60%,#dadada);border-top:1px solid #d4d4d4"></div>
<div class="a" style="left:18.1px;top:807.6px;width:99.1px;height:17px;background:linear-gradient(#ffffff,#f6f6f6);border:1px solid #d4d4d4;border-radius:3px"></div>
<div class="t" style="left:24.1px;top:810.09px;font-size:10.6px;color:#1e1e1e;transform:scaleX(1.08);transform-origin:0 0;font-weight:bold">Queued files</div>
<div class="a" style="left:117.6px;top:807.6px;width:99.6px;height:17px;background:linear-gradient(#ededed,#e3e3e3);border:1px solid #d2d2d2;border-radius:3px"></div>
<div class="t" style="left:124.7px;top:810.92px;font-size:10.45px;color:#333333;transform:scaleX(1.1);transform-origin:0 0;">Failed transfers</div>
<div class="a" style="left:217.6px;top:807.6px;width:145.8px;height:17px;background:linear-gradient(#ededed,#e3e3e3);border:1px solid #d2d2d2;border-radius:3px"></div>
<div class="t" style="left:224.5px;top:810.92px;font-size:10.45px;color:#333333;transform:scaleX(1.1);transform-origin:0 0;">Successful transfers (1)</div>
<div class="a" style="left:13px;top:826.7px;width:1011px;height:1px;background:#d6d6d6"></div>
<div class="a" style="left:13px;top:827.7px;width:1011px;height:1px;background:#f7f7f7"></div>
<div class="a" style="left:13px;top:828.7px;width:1011px;height:22.8px;background:linear-gradient(#eaeaea,#dcdcdc);border-bottom-left-radius:6px;border-left:1px solid #ececec;border-bottom:1.5px solid #e4e4e4"></div>
<svg style="left:943px;top:831px" width="15" height="16" viewBox="0 0 15 16"><path d="M3.5 7V5a4 4 0 0 1 8 0v2" stroke="#6e6e6e" stroke-width="1.8" fill="none"/>
<rect x="1" y="7" width="13" height="8" rx="1" fill="#f2c20a"/><circle cx="7.5" cy="11" r="1.3" fill="#333"/></svg>
<svg style="left:959.5px;top:832px" width="14" height="14" viewBox="0 0 14 14"><circle cx="7" cy="7" r="6" fill="#fff" stroke="#7a7a7a" stroke-width="1.6"/>
<circle cx="7" cy="8" r="2" fill="#777"/><path d="M7 8l3 -4" stroke="#777" stroke-width="1.2"/></svg>
<div class="a" style="left:977px;top:831px;width:1px;height:15px;background:#d8d8d8"></div>
<div class="t" style="left:983.5px;top:834.93px;font-size:10.2px;color:#4a4a4a;transform:scaleX(0.94);transform-origin:0 0;">Queue: e</div>
</body></html>
